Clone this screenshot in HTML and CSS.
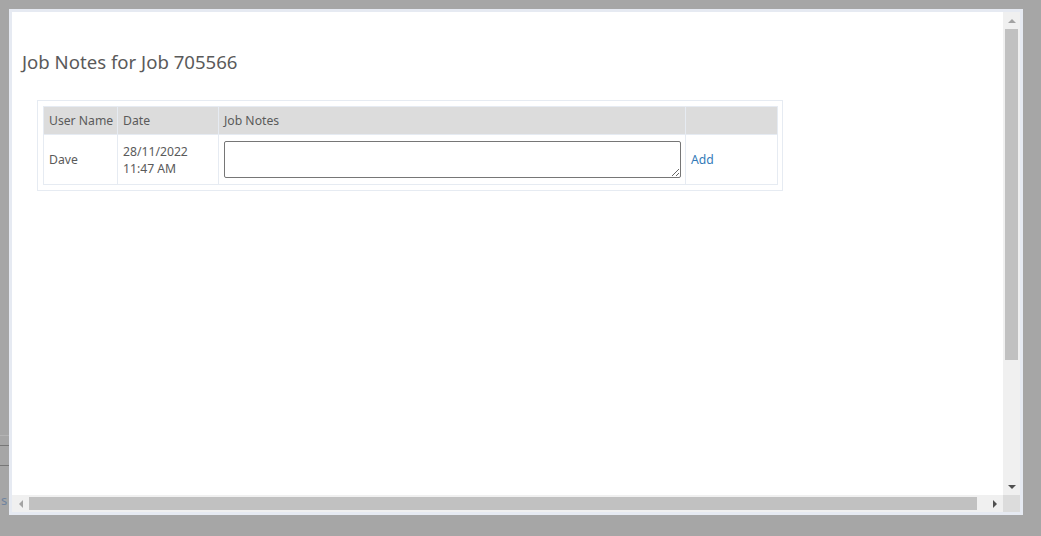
FILE: index.html
```html
<!DOCTYPE html>
<html lang="en">
<head>
  <meta charset="UTF-8" />
  <title>Job Notes</title>
  <link rel="stylesheet" href="styles.css">
</head>
<body>
  <div class="backdrop-edge">
    <div class="edge-line light"></div>
    <div class="edge-line"></div>
    <div class="edge-line"></div>
    <span class="edge-text">s</span>
  </div>

  <div class="dialog">
    <div class="dialog-main">
      <div class="content">
        <h2 class="title">Job Notes for Job 705566</h2>
        <div class="notes-box">
          <table class="notes">
            <colgroup>
              <col class="c-user">
              <col class="c-date">
              <col class="c-notes">
              <col class="c-action">
            </colgroup>
            <thead>
              <tr>
                <th>User Name</th>
                <th>Date</th>
                <th>Job Notes</th>
                <th></th>
              </tr>
            </thead>
            <tbody>
              <tr>
                <td>Dave</td>
                <td>28/11/2022<br>11:47 AM</td>
                <td><textarea class="note-input"></textarea></td>
                <td><a href="#" class="add-link">Add</a></td>
              </tr>
            </tbody>
          </table>
        </div>
      </div>
      <div class="vscroll">
        <div class="sb-btn"><span class="arrow up"></span></div>
        <div class="sb-track"><div class="sb-thumb v"></div></div>
        <div class="sb-btn"><span class="arrow down"></span></div>
      </div>
    </div>
    <div class="hscroll-row">
      <div class="hscroll">
        <div class="sb-btn"><span class="arrow left"></span></div>
        <div class="sb-track"><div class="sb-thumb h"></div></div>
        <div class="sb-btn"><span class="arrow right"></span></div>
      </div>
      <div class="corner"></div>
    </div>
  </div>
</body>
</html>
```

FILE: styles.css
```css
body {
  margin: 0;
  background: #a6a6a6;
  font-family: "Segoe UI", "Noto Sans", sans-serif;
  color: #5a5a5a;
  display: flex;
  align-items: flex-start;
  height: 536px;
  overflow: hidden;
}
.backdrop-edge {
  width: 9px;
  padding-top: 435px;
  display: flex;
  flex-direction: column;
}
.edge-line {
  height: 1px;
  background: #777;
  margin-bottom: 19px;
}
.edge-line.light {
  background: #b4b4b4;
  margin-bottom: 9px;
}
.edge-text {
  margin-top: 8px;
  font-size: 13px;
  line-height: 14px;
  color: #6f84a0;
  margin-left: 1px;
}
.dialog {
  margin-top: 9px;
  width: 1008px;
  height: 500px;
  border: 3px solid #e6eaf2;
  display: flex;
  flex-direction: column;
}
.dialog-main {
  flex: 1;
  display: flex;
  min-height: 0;
}
.content {
  flex: 1;
  background: #fff;
  padding: 0 10px;
  overflow: hidden;
}
.title {
  margin: 36px 0 0;
  font-size: 18.6px;
  font-weight: normal;
  line-height: 28px;
  color: #5a5a5a;
}
.notes-box {
  margin: 24px 0 0 15px;
  width: 734px;
  padding: 5px;
  border: 1px solid #e6ebf2;
}
.notes {
  border-collapse: collapse;
  table-layout: fixed;
  width: 734px;
  font-size: 12.2px;
}
.c-user { width: 74px; }
.c-date { width: 101px; }
.c-notes { width: 467px; }
.c-action { width: 92px; }
.notes th,
.notes td {
  border: 1px solid #e6ebf2;
  padding: 0 5px;
  text-align: left;
  font-weight: normal;
  color: #5a5a5a;
  line-height: 17px;
  white-space: nowrap;
}
.notes th {
  background: #dcdcdc;
  height: 27px;
}
.notes td {
  height: 49px;
}
.note-input {
  display: block;
  box-sizing: border-box;
  width: 457px;
  height: 37px;
  margin: 0;
  border: 1px solid #767676;
  border-radius: 2px;
  font-family: inherit;
}
.add-link {
  color: #337ab7;
  text-decoration: none;
}
.vscroll {
  width: 17px;
  background: #f0f0f0;
  display: flex;
  flex-direction: column;
}
.hscroll-row {
  height: 17px;
  display: flex;
}
.hscroll {
  flex: 1;
  background: #f0f0f0;
  display: flex;
}
.corner {
  width: 17px;
  background: #dcdcdc;
}
.sb-btn {
  width: 17px;
  height: 17px;
  flex: none;
  display: flex;
  align-items: center;
  justify-content: center;
}
.sb-track {
  flex: 1;
  display: flex;
}
.vscroll .sb-track {
  flex-direction: column;
}
.sb-thumb {
  background: #c1c1c1;
}
.sb-thumb.v {
  width: 13px;
  height: 331px;
  margin-left: 2px;
}
.sb-thumb.h {
  height: 13px;
  width: 948px;
  margin-top: 2px;
}
.arrow {
  width: 0;
  height: 0;
  border: 4px solid transparent;
}
.arrow.up {
  border-top: 0;
  border-bottom-color: #a3a3a3;
  margin-top: 1px;
}
.arrow.down {
  border-bottom: 0;
  border-top-color: #505050;
}
.arrow.left {
  border-left: 0;
  border-right-color: #a3a3a3;
}
.arrow.right {
  border-right: 0;
  border-left-color: #505050;
}
```
